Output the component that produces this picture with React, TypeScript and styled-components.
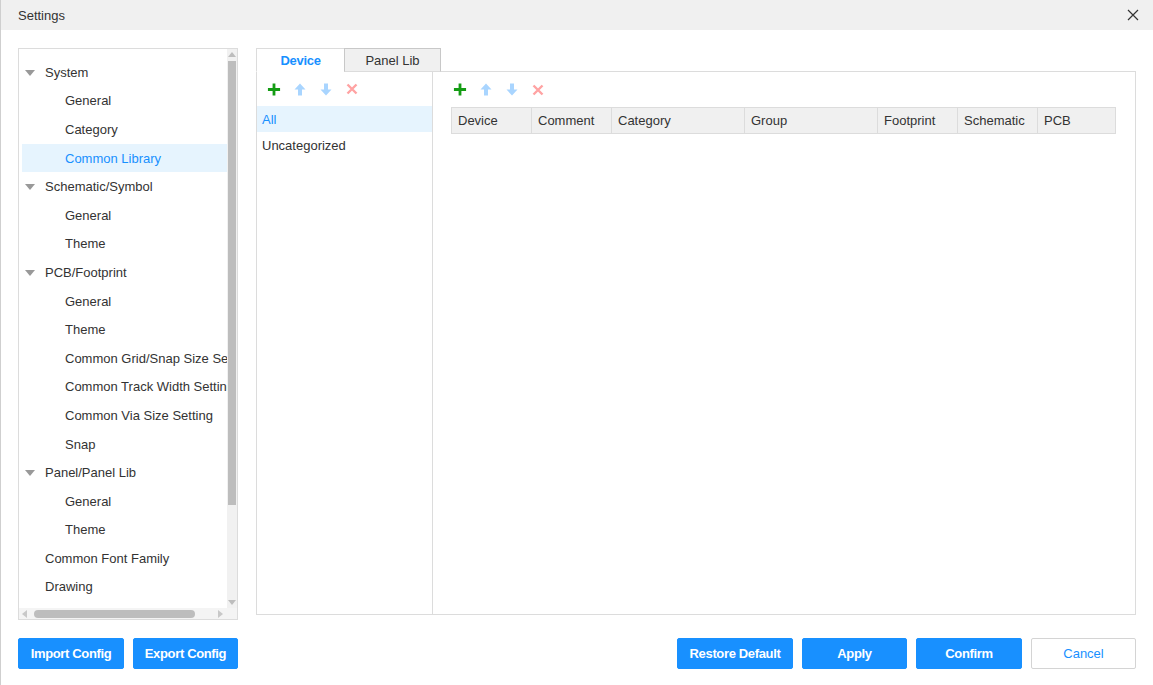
import React from "react";
import styled, { createGlobalStyle } from "styled-components";

const Global = createGlobalStyle`
  html, body { margin: 0; padding: 0; background: #fff; }
  body { font-family: "Liberation Sans", Arial, sans-serif; font-size: 13px; color: #333; }
  * { box-sizing: border-box; }
`;

const Dialog = styled.div`
  width: 1153px;
  height: 685px;
  display: flex;
  flex-direction: column;
  background: #fff;
  border-left: 1px solid #cfcfcf;
`;

const TitleBar = styled.div`
  height: 30px;
  flex: none;
  background: #f0f0f0;
  display: flex;
  align-items: center;
  justify-content: space-between;
  padding: 0 13px 0 17px;
  font-size: 13px;
  color: #333;
`;

const CloseButton = styled.button`
  border: 0;
  background: transparent;
  padding: 0;
  width: 14px;
  height: 14px;
  display: flex;
  align-items: center;
  justify-content: center;
  cursor: pointer;
`;

const Body = styled.div`
  flex: 1;
  display: flex;
  flex-direction: column;
  padding: 18px 17px 17px 17px;
`;

const Main = styled.div`
  display: flex;
  gap: 18px;
  height: 572px;
`;

const TreeBox = styled.div`
  flex: none;
  width: 220px;
  height: 572px;
  border: 1px solid #dcdcdc;
  display: grid;
  grid-template-columns: 1fr 10px;
  grid-template-rows: 1fr 11px;
`;

const TreeViewport = styled.div`
  overflow: hidden;
  padding: 9px 0 0 3px;
`;

const TreeRow = styled.div<{ $level: number; $selected?: boolean }>`
  height: 28.6px;
  display: flex;
  align-items: center;
  white-space: nowrap;
  padding-left: ${(p) => (p.$level === 0 ? 3 : 43)}px;
  background: ${(p) => (p.$selected ? "#e6f4fe" : "transparent")};
  color: ${(p) => (p.$selected ? "#1890ff" : "#333")};
  width: 205px;
`;

const Caret = styled.span<{ $hidden?: boolean }>`
  display: inline-block;
  width: 0;
  height: 0;
  border-left: 5px solid transparent;
  border-right: 5px solid transparent;
  border-top: 6px solid ${(p) => (p.$hidden ? "transparent" : "#999")};
  margin-right: 10px;
  margin-top: 1px;
  flex: none;
`;

const VScroll = styled.div`
  background: #f1f1f1;
  display: flex;
  flex-direction: column;
  align-items: center;
  padding-top: 3px;
`;

const VThumb = styled.div`
  width: 8px;
  height: 444px;
  margin-top: 4px;
  background: #bdbdbd;
`;

const VSpacer = styled.div`
  flex: 1;
`;

const ArrowUp = styled.div<{ $down?: boolean }>`
  width: 0;
  height: 0;
  border-left: 4px solid transparent;
  border-right: 4px solid transparent;
  ${(p) => (p.$down ? "border-top: 5px solid #bdbdbd;" : "border-bottom: 5px solid #bdbdbd;")}
  margin-bottom: ${(p) => (p.$down ? "3px" : "0")};
`;

const HScroll = styled.div`
  grid-column: 1 / span 2;
  background: #f4f4f4;
  display: flex;
  align-items: center;
  padding: 0 14px 0 3px;
`;

const ArrowSide = styled.div<{ $right?: boolean }>`
  width: 0;
  height: 0;
  border-top: 4px solid transparent;
  border-bottom: 4px solid transparent;
  ${(p) => (p.$right ? "border-left: 5px solid #c8c8c8;" : "border-right: 5px solid #c8c8c8;")}
`;

const HThumb = styled.div`
  width: 161px;
  height: 8px;
  border-radius: 4px;
  background: #bdbdbd;
  margin-left: 7px;
`;

const RightCol = styled.div`
  flex: 1;
  min-width: 0;
  display: flex;
  flex-direction: column;
  height: 567px;
`;

const Tabs = styled.div`
  display: flex;
  height: 24px;
  position: relative;
  z-index: 1;
`;

const Tab = styled.div<{ $active?: boolean }>`
  height: 24px;
  display: flex;
  align-items: center;
  justify-content: center;
  width: ${(p) => (p.$active ? 88 : 97)}px;
  background: ${(p) => (p.$active ? "#fff" : "#f0f0f0")};
  border: 1px solid ${(p) => (p.$active ? "#dcdcdc" : "#c8c8c8")};
  border-bottom: ${(p) => (p.$active ? "1px solid #fff" : "1px solid #dcdcdc")};
  color: ${(p) => (p.$active ? "#1890ff" : "#333")};
  font-weight: ${(p) => (p.$active ? "bold" : "normal")};
  letter-spacing: ${(p) => (p.$active ? "-0.3px" : "0")};
  ${(p) => (p.$active ? "border-right: 0;" : "")}
`;

const Panel = styled.div`
  flex: 1;
  margin-top: -1px;
  border: 1px solid #dcdcdc;
  display: grid;
  grid-template-columns: 176px 1fr;
`;

const LeftList = styled.div`
  border-right: 1px solid #dcdcdc;
  display: flex;
  flex-direction: column;
`;

const Toolbar = styled.div<{ $pad: number; $h: number }>`
  height: ${(p) => p.$h}px;
  display: flex;
  align-items: center;
  gap: 12px;
  padding-left: ${(p) => p.$pad}px;
  flex: none;
`;

const IconBox = styled.span`
  width: 14px;
  height: 14px;
  display: flex;
  align-items: center;
  justify-content: center;
`;

const ListRow = styled.div<{ $selected?: boolean }>`
  height: 26px;
  display: flex;
  align-items: center;
  padding-left: 5px;
  background: ${(p) => (p.$selected ? "#e6f4fe" : "transparent")};
  color: ${(p) => (p.$selected ? "#1890ff" : "#333")};
`;

const TableArea = styled.div`
  display: flex;
  flex-direction: column;
  min-width: 0;
`;

const TableWrap = styled.div`
  padding: 0 19px 0 18px;
`;

const HeaderRow = styled.div`
  display: grid;
  grid-template-columns: 79px 80px 133px 133px 80px 80px 78px;
  height: 27px;
  background: #f0f0f0;
  border: 1px solid #dcdcdc;
`;

const HeaderCell = styled.div`
  display: flex;
  align-items: center;
  padding-left: 6px;
  border-left: 1px solid #dcdcdc;
  color: #333;
  &:first-child { border-left: 0; }
`;

const Footer = styled.div`
  margin-top: 18px;
  display: flex;
  justify-content: space-between;
`;

const BtnGroup = styled.div<{ $gap: number }>`
  display: flex;
  gap: ${(p) => p.$gap}px;
`;

const Button = styled.button<{ $ghost?: boolean; $w?: number }>`
  height: 31px;
  width: ${(p) => p.$w ?? 106}px;
  padding: 0;
  border-radius: 2px;
  font-family: "Liberation Sans", Arial, sans-serif;
  font-size: 13px;
  font-weight: ${(p) => (p.$ghost ? "normal" : "bold")};
  letter-spacing: ${(p) => (p.$ghost ? "0" : "-0.35px")};
  color: ${(p) => (p.$ghost ? "#1890ff" : "#fff")};
  background: ${(p) => (p.$ghost ? "#fff" : "#1890ff")};
  border: 1px solid ${(p) => (p.$ghost ? "#d4d4d4" : "#1890ff")};
  cursor: pointer;
`;

const PlusIcon = () => (
  <svg width="15" height="15" viewBox="0 0 15 15">
    <path d="M7.5 1v13M1 7.5h13" stroke="#149c14" strokeWidth="3" />
  </svg>
);
const UpIcon = () => (
  <svg width="12" height="13" viewBox="0 0 12 13">
    <path d="M6 0.5L11.5 6.5H8V12.5H4V6.5H0.5Z" fill="#a9d5ff" />
  </svg>
);
const DownIcon = () => (
  <svg width="12" height="13" viewBox="0 0 12 13">
    <path d="M6 12.5L11.5 6.5H8V0.5H4V6.5H0.5Z" fill="#a9d5ff" />
  </svg>
);
const DelIcon = () => (
  <svg width="12" height="12" viewBox="0 0 12 12">
    <path d="M1.5 1.5L10.5 10.5M10.5 1.5L1.5 10.5" stroke="#ffa3a3" strokeWidth="2.4" />
  </svg>
);
const CloseIcon = () => (
  <svg width="12" height="12" viewBox="0 0 12 12">
    <path d="M1 1L11 11M11 1L1 11" stroke="#333" strokeWidth="1.2" />
  </svg>
);

type Node = { label: string; level: number; caret?: boolean; selected?: boolean };
const tree: Node[] = [
  { label: "System", level: 0, caret: true },
  { label: "General", level: 1 },
  { label: "Category", level: 1 },
  { label: "Common Library", level: 1, selected: true },
  { label: "Schematic/Symbol", level: 0, caret: true },
  { label: "General", level: 1 },
  { label: "Theme", level: 1 },
  { label: "PCB/Footprint", level: 0, caret: true },
  { label: "General", level: 1 },
  { label: "Theme", level: 1 },
  { label: "Common Grid/Snap Size Setting", level: 1 },
  { label: "Common Track Width Setting", level: 1 },
  { label: "Common Via Size Setting", level: 1 },
  { label: "Snap", level: 1 },
  { label: "Panel/Panel Lib", level: 0, caret: true },
  { label: "General", level: 1 },
  { label: "Theme", level: 1 },
  { label: "Common Font Family", level: 0 },
  { label: "Drawing", level: 0 },
];

const columns = ["Device", "Comment", "Category", "Group", "Footprint", "Schematic", "PCB"];

const Tools = ({ pad, h }: { pad: number; h: number }) => (
  <Toolbar $pad={pad} $h={h}>
    <IconBox><PlusIcon /></IconBox>
    <IconBox><UpIcon /></IconBox>
    <IconBox><DownIcon /></IconBox>
    <IconBox><DelIcon /></IconBox>
  </Toolbar>
);

export default function App() {
  return (
    <>
      <Global />
      <Dialog>
        <TitleBar>
          <span>Settings</span>
          <CloseButton aria-label="close"><CloseIcon /></CloseButton>
        </TitleBar>
        <Body>
          <Main>
            <TreeBox>
              <TreeViewport>
                {tree.map((n, i) => (
                  <TreeRow key={i} $level={n.level} $selected={n.selected}>
                    {n.level === 0 && <Caret $hidden={!n.caret} />}
                    {n.label}
                  </TreeRow>
                ))}
              </TreeViewport>
              <VScroll>
                <ArrowUp />
                <VThumb />
                <VSpacer />
                <ArrowUp $down />
              </VScroll>
              <HScroll>
                <ArrowSide />
                <HThumb />
                <VSpacer />
                <ArrowSide $right />
              </HScroll>
            </TreeBox>
            <RightCol>
              <Tabs>
                <Tab $active>Device</Tab>
                <Tab>Panel Lib</Tab>
              </Tabs>
              <Panel>
                <LeftList>
                  <Tools pad={10} h={34} />
                  <ListRow $selected>All</ListRow>
                  <ListRow>Uncategorized</ListRow>
                </LeftList>
                <TableArea>
                  <Tools pad={20} h={35} />
                  <TableWrap>
                    <HeaderRow>
                      {columns.map((c) => (
                        <HeaderCell key={c}>{c}</HeaderCell>
                      ))}
                    </HeaderRow>
                  </TableWrap>
                </TableArea>
              </Panel>
            </RightCol>
          </Main>
          <Footer>
            <BtnGroup $gap={9}>
              <Button>Import Config</Button>
              <Button $w={105}>Export Config</Button>
            </BtnGroup>
            <BtnGroup $gap={9}>
              <Button $w={116}>Restore Default</Button>
              <Button $w={105}>Apply</Button>
              <Button>Confirm</Button>
              <Button $ghost $w={105}>Cancel</Button>
            </BtnGroup>
          </Footer>
        </Body>
      </Dialog>
    </>
  );
}
